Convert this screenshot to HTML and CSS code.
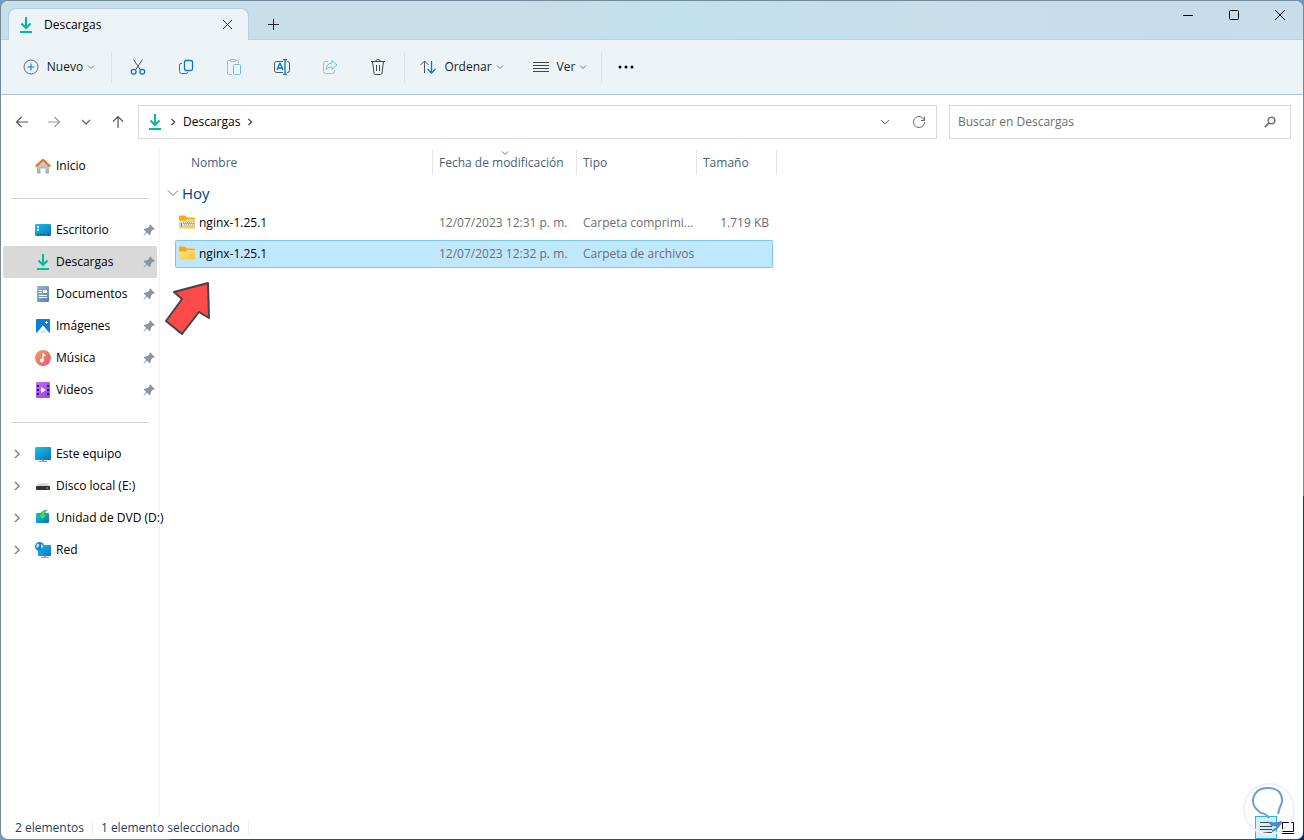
FILE: index.html
```
<!DOCTYPE html>
<html lang="es">
<head>
  <meta charset="UTF-8">
  <meta name="viewport" content="width=device-width, initial-scale=1.0">
  <title>Descargas</title>
  <link rel="stylesheet" href="styles.css">
</head>
<body>
  <svg class="defs" aria-hidden="true">
    <defs>
      <linearGradient id="gBlue" x1="0" y1="0" x2="1" y2="1"><stop offset="0" stop-color="#12c8e8"/><stop offset="1" stop-color="#0f6fc0"/></linearGradient>
      <linearGradient id="gFolder" x1="0" y1="0" x2="1" y2="1"><stop offset="0" stop-color="#ffe38a"/><stop offset="1" stop-color="#fcc43a"/></linearGradient>
      <linearGradient id="gDoc" x1="0" y1="0" x2="1" y2="1"><stop offset="0" stop-color="#9db9d0"/><stop offset="1" stop-color="#587ea6"/></linearGradient>
      <linearGradient id="gMusic" x1="0" y1="0" x2="1" y2="1"><stop offset="0" stop-color="#f89a68"/><stop offset="1" stop-color="#dd5a7c"/></linearGradient>
      <linearGradient id="gVideo" x1="0" y1="0" x2="1" y2="1"><stop offset="0" stop-color="#c070f8"/><stop offset="1" stop-color="#9a40e0"/></linearGradient>
      <linearGradient id="gHome" x1="0" y1="0" x2="0" y2="1"><stop offset="0" stop-color="#d8d8d8"/><stop offset="1" stop-color="#a8a8a8"/></linearGradient>
    </defs>
    <symbol id="download" viewBox="0 0 16 16"><path d="M8 0v11M3.500 6.500 8 11 12.500 6.500M2 15h12" fill="none" stroke="#00bd96" stroke-width="2"/></symbol>
    <symbol id="down" viewBox="0 0 8 8"><path d="M1 2.500 4 5.500 7 2.500" fill="none" stroke="currentColor"/></symbol>
    <symbol id="right" viewBox="0 0 10 10"><path d="M3 1l4 4-4 4" fill="none" stroke="currentColor" stroke-width="1.500"/></symbol>
    <symbol id="pin" viewBox="0 0 12 12"><path d="M7.300.500 11.700 5 10.500 6 9.700 5.700 7.800 7.900 7.600 10.300 6.400 11.200 4 8.700 1 11.500.500 11 3.300 8 .800 5.700 1.700 4.400 4.200 4.300 6.400 2.400 6.200 1.500Z" fill="#8996a0"/></symbol>
    <symbol id="folder" viewBox="0 0 16 14"><path d="M0 1.500Q0 .5 1 .5h5l2 2h7q1 0 1 1V8H0Z" fill="#f9ab0d"/><path d="M0 5.500h6.500L8 4h8v8.500q0 1-1 1H1q-1 0-1-1Z" fill="url(#gFolder)"/></symbol>
  </svg>

  <div class="window">
    <header class="titlebar">
      <div class="tab">
        <svg class="icon"><use href="#download"/></svg>
        <span class="tab-name">Descargas</span>
        <button class="tab-close" aria-label="Cerrar pestaña"><svg width="9" height="9" viewBox="0 0 9 9"><path d="M0 0l9 9M9 0 0 9" stroke="#222"/></svg></button>
      </div>
      <button class="new-tab" aria-label="Nueva pestaña"><svg width="11" height="11" viewBox="0 0 11 11"><path d="M5.500 0v11M0 5.500h11" stroke="#222"/></svg></button>
      <div class="window-buttons">
        <button aria-label="Minimizar"><svg width="10" height="10" viewBox="0 0 10 10"><path d="M0 5.500h10" stroke="#000"/></svg></button>
        <button aria-label="Maximizar"><svg width="10" height="10" viewBox="0 0 10 10"><rect x=".5" y=".5" width="9" height="9" rx="1" fill="none" stroke="#000"/></svg></button>
        <button aria-label="Cerrar"><svg width="10" height="10" viewBox="0 0 10 10"><path d="M0 0l10 10M10 0 0 10" stroke="#000"/></svg></button>
      </div>
    </header>

    <div class="toolbar">
      <button class="tool tool-new">
        <svg class="icon" viewBox="0 0 16 16" fill="none"><circle cx="8" cy="8" r="7" stroke="#666"/><path d="M8 4.500v7M4.500 8h7" stroke="#0078d4"/></svg>
        Nuevo <svg class="caret"><use href="#down"/></svg>
      </button>
      <span class="divider"></span>
      <div class="tool-group">
        <button class="tool-icon" aria-label="Cortar"><svg class="icon" viewBox="0 0 16 16" fill="none"><path d="M3.500.500 10.500 11M12.500.500 5.500 11" stroke="#555"/><circle cx="3.700" cy="12.800" r="2.400" stroke="#0078d4" stroke-width="1.300"/><circle cx="12.300" cy="12.800" r="2.400" stroke="#0078d4" stroke-width="1.300"/></svg></button>
        <button class="tool-icon" aria-label="Copiar"><svg class="icon" viewBox="0 0 16 16" fill="none"><path d="M4 4.500H3Q1.500 4.500 1.500 6v6.500q0 2 2 2H8q1.500 0 1.500-1.500" stroke="#666"/><rect x="6.500" y="1.500" width="8" height="10" rx="1.500" stroke="#0078d4" stroke-width="1.300"/></svg></button>
        <button class="tool-icon" aria-label="Pegar" disabled><svg class="icon" viewBox="0 0 16 16" fill="none"><path d="M6 15.500H2.500q-1 0-1-1v-12q0-1 1-1H4M10 1.500h1.500q1 0 1 1V4M4.500.500h5v2h-5z" stroke="#b4b8ba"/><rect x="7.500" y="5.500" width="7" height="10" rx="1" stroke="#6ebee8"/></svg></button>
        <button class="tool-icon" aria-label="Cambiar nombre"><svg class="icon" viewBox="0 0 16 16" fill="none"><path d="M9 2.500H2.500q-2 0-2 2v7q0 2 2 2H9M13 2.500h.500q2 0 2 2v7q0 2-2 2H13" stroke="#555"/><path d="M3 11 5.800 4.500h.400L9 11M4 9h4M11 .500v15M9 .500h4M9 15.500h4" stroke="#0078d4" stroke-width="1.300"/></svg></button>
        <button class="tool-icon" aria-label="Compartir" disabled><svg class="icon" viewBox="0 0 16 16" fill="none"><path d="M6 2.500H3.500q-2 0-2 2v8q0 2 2 2h7q2 0 2-2V11" stroke="#b4b8ba"/><path d="M10 1.500 15 6l-5 4.500V8Q6 7.500 4 10.500 4.500 4.500 10 4Z" stroke="#6ebee8" stroke-linejoin="round"/></svg></button>
        <button class="tool-icon" aria-label="Eliminar"><svg class="icon" viewBox="0 0 16 16" fill="none" stroke="#444"><path d="M1 2.500h14M5.500 2.500Q6 .500 8 .500t2.500 2M2.500 2.500 4 14q.200 1.500 1.500 1.500h5q1.300 0 1.500-1.500l1.500-11.500M6.500 6v6M9.500 6v6"/></svg></button>
      </div>
      <span class="divider"></span>
      <button class="tool tool-sort">
        <svg class="icon" viewBox="0 0 16 16" fill="none"><path d="M4.500 14V2M.500 6l4-4 4 4" stroke="#555"/><path d="M11.500 2v12M7.500 10l4 4 4-4" stroke="#0078d4" stroke-width="1.300"/></svg>
        Ordenar <svg class="caret"><use href="#down"/></svg>
      </button>
      <button class="tool tool-view">
        <svg class="icon" viewBox="0 0 16 16"><path d="M0 3.500h16M0 6.500h16M0 9.500h16M0 12.500h16" stroke="#444"/></svg>
        Ver <svg class="caret"><use href="#down"/></svg>
      </button>
      <span class="divider"></span>
      <button class="tool-icon more" aria-label="Más opciones"><svg class="icon" viewBox="0 0 16 16"><circle cx="2" cy="8" r="1.500"/><circle cx="8" cy="8" r="1.500"/><circle cx="14" cy="8" r="1.500"/></svg></button>
    </div>

    <nav class="address-row">
      <div class="history">
        <button aria-label="Atrás"><svg width="14" height="14" viewBox="0 0 14 14" fill="none"><path d="M13 7H1.500M6.500 2l-5 5 5 5" stroke="#555" stroke-width="1.200"/></svg></button>
        <button aria-label="Adelante" disabled><svg width="14" height="14" viewBox="0 0 14 14" fill="none"><path d="M1 7h11.500M7.500 2l5 5-5 5" stroke="#999" stroke-width="1.200"/></svg></button>
        <button aria-label="Recientes"><svg width="10" height="10" viewBox="0 0 10 10" fill="none"><path d="M1 3l4 4 4-4" stroke="#666" stroke-width="1.300"/></svg></button>
        <button aria-label="Subir"><svg width="14" height="14" viewBox="0 0 14 14" fill="none"><path d="M7 13V1.500M2 6.500l5-5 5 5" stroke="#555" stroke-width="1.200"/></svg></button>
      </div>
      <div class="address">
        <svg class="icon"><use href="#download"/></svg>
        <svg class="crumb-arrow"><use href="#right"/></svg>
        <a href="#descargas">Descargas</a>
        <svg class="crumb-arrow"><use href="#right"/></svg>
        <button class="address-menu" aria-label="Ubicaciones anteriores"><svg width="10" height="10" viewBox="0 0 10 10" fill="none"><path d="M1 3l4 4 4-4" stroke="#666"/></svg></button>
        <button aria-label="Actualizar"><svg width="14" height="14" viewBox="0 0 14 14" fill="none"><path d="M12.300 5.500A5.500 5.500 0 1 0 12.500 7M12.500 1.500v4H9" stroke="#666"/></svg></button>
      </div>
      <div class="search">
        <input type="text" aria-label="Buscar en Descargas" placeholder="Buscar en Descargas">
        <svg width="12" height="12" viewBox="0 0 12 12" fill="none"><circle cx="7.500" cy="4.500" r="3.300" stroke="#777" stroke-width="1.600"/><path d="M5 7 .800 11.200" stroke="#777" stroke-width="1.800"/></svg>
      </div>
    </nav>

    <div class="content">
      <aside class="sidebar">
        <a class="place" href="#inicio"><svg class="icon" viewBox="0 0 16 16"><path d="M2 7.500 8 2l6 5.500V14.500q0 1-1 1h-2.500v-5h-5v5H3q-1 0-1-1Z" fill="url(#gHome)"/><path d="M.800 8.500 8 1.800l7.200 6.700" fill="none" stroke="#f06a1c" stroke-width="2" stroke-linejoin="round"/></svg>Inicio</a>
        <hr>
        <a class="place" href="#escritorio"><svg class="icon" viewBox="0 0 16 16"><rect y="2" width="16" height="12" rx="1" fill="url(#gBlue)"/><path d="M2 4h2v2H2zM2 7h2v2H2z" fill="#fff"/><path d="M2 12.500h2M5 12.500h2M8 12.500h2M12 12.500h2" stroke="#064b8a"/></svg>Escritorio<svg class="pin"><use href="#pin"/></svg></a>
        <a class="place active" href="#descargas"><svg class="icon"><use href="#download"/></svg>Descargas<svg class="pin"><use href="#pin"/></svg></a>
        <a class="place" href="#documentos"><svg class="icon" viewBox="0 0 16 16"><rect x="2" y="0" width="12" height="16" rx="1" fill="url(#gDoc)"/><path d="M4 4.500h3M4 6.500h3M4 9.500h8M4 11.500h8" stroke="#fff"/><path d="M8 4h4v3H8z" fill="#fff"/></svg>Documentos<svg class="pin"><use href="#pin"/></svg></a>
        <a class="place" href="#imagenes"><svg class="icon" viewBox="0 0 16 16"><rect x="1" y="1" width="14" height="14" rx="1" fill="#0f7fd6"/><path d="M1.500 15 8 7.500 14.500 15Z" fill="#fff"/><path d="M5 15l3-3.500 3 3.500Z" fill="#cfe6f8"/><path d="M11.500 3v3M10 4.500h3" stroke="#fff"/></svg>Imágenes<svg class="pin"><use href="#pin"/></svg></a>
        <a class="place" href="#musica"><svg class="icon" viewBox="0 0 16 16"><circle cx="8" cy="8" r="8" fill="url(#gMusic)"/><path d="M8 3v7M8 3.500q1 2 2.500 2" fill="none" stroke="#fff" stroke-width="1.300"/><circle cx="6.800" cy="10.500" r="1.900" fill="#fff"/></svg>Música<svg class="pin"><use href="#pin"/></svg></a>
        <a class="place" href="#videos"><svg class="icon" viewBox="0 0 16 16"><rect x="1" width="14" height="16" rx="1" fill="url(#gVideo)"/><path d="M2 3h2v2H2zM2 7h2v2H2zM2 11h2v2H2zM12 3h2v2h-2zM12 7h2v2h-2zM12 11h2v2h-2z" fill="#3b1470"/><path d="M6 5l5 3-5 3Z" fill="#fff"/></svg>Videos<svg class="pin"><use href="#pin"/></svg></a>
        <hr>
        <a class="place tree" href="#equipo"><svg class="expand"><use href="#right"/></svg><svg class="icon" viewBox="0 0 16 16"><path d="M7 12h2v3H7z" fill="#9ab"/><path d="M4 15.500h8" stroke="#8a9ba8"/><rect y="1" width="16" height="13" rx="1" fill="url(#gBlue)"/></svg>Este equipo</a>
        <a class="place tree" href="#disco"><svg class="expand"><use href="#right"/></svg><svg class="icon" viewBox="0 0 16 16"><path d="M3 5.500h10l2 3H1Z" fill="#d5d5d5"/><rect x="1" y="8" width="14" height="4" rx="1" fill="#333"/><path d="M11 10h2" stroke="#4ddc7a"/></svg>Disco local (E:)</a>
        <a class="place tree" href="#dvd"><svg class="expand"><use href="#right"/></svg><svg class="icon" viewBox="0 0 16 16"><rect x="1" y="3" width="13" height="10" rx="1" fill="url(#gBlue)"/><path d="M12.500 0Q6.500 0 6 4.500H3l4.500 5 4.500-5H9.500Q9.500 1.500 12.500 0Z" fill="#3ae06d" stroke="#128a3c" stroke-width=".500"/></svg>Unidad de DVD (D:)</a>
        <a class="place tree" href="#red"><svg class="expand"><use href="#right"/></svg><svg class="icon" viewBox="0 0 16 16"><path d="M9 13h2v2H9z" fill="#9ab"/><path d="M6 15.500h8" stroke="#8a9ba8"/><rect x="3" y="3" width="13" height="11" rx="1" fill="url(#gBlue)"/><circle cx="4.500" cy="4.500" r="4.500" fill="#1687cf"/><path d="M2 1.500q3 .500 2 2.500T1 5.500M6 2q2 1 2.500 2.500L6 7Z" fill="#b9e6f5"/></svg>Red</a>
      </aside>

      <main class="files">
        <table>
          <colgroup><col class="c-name"><col class="c-date"><col class="c-type"><col class="c-size"><col class="c-end"></colgroup>
          <thead>
            <tr><th>Nombre</th><th class="sorted">Fecha de modificación<svg class="sort-mark"><use href="#down"/></svg></th><th>Tipo</th><th>Tamaño</th><th class="end"></th></tr>
          </thead>
          <tbody>
            <tr class="group"><td colspan="5"><button><svg width="12" height="12" viewBox="0 0 12 12" fill="none"><path d="M1 3.500l5 5 5-5" stroke="#777"/></svg>Hoy</button></td></tr>
            <tr>
              <td class="name"><svg class="file-icon" viewBox="0 0 16 14"><use href="#folder"/><path d="M1 8.500h15" stroke="#f3f3f3" stroke-width="3"/><path d="M2 8h14" stroke="#666" stroke-dasharray="1 1"/><path d="M3 9h13" stroke="#777" stroke-dasharray="1 1"/><path d="M1 7h3v6H1z" fill="#ddd"/><path d="M2.500 8v4" stroke="#777"/></svg>nginx-1.25.1</td>
              <td>12/07/2023 12:31 p. m.</td><td>Carpeta comprimi...</td><td class="size">1.719 KB</td><td class="end"></td>
            </tr>
            <tr class="selected">
              <td class="name"><svg class="file-icon"><use href="#folder"/></svg>nginx-1.25.1</td>
              <td>12/07/2023 12:32 p. m.</td><td>Carpeta de archivos</td><td class="size"></td><td class="end"></td>
            </tr>
          </tbody>
        </table>
        <svg class="pointer" width="56" height="60" viewBox="0 0 56 60"><path d="M48 6 14 15 22 22 6 44 22 57 39 35 49 41Z" fill="#ff4a4a" stroke="#444" stroke-width="2" stroke-linejoin="round"/></svg>
      </main>
    </div>

    <footer class="statusbar">
      <span>2 elementos</span>
      <span>1 elemento seleccionado</span>
      <div class="views">
        <button class="on" aria-label="Detalles"><svg width="12" height="11" viewBox="0 0 12 11"><path d="M0 .500h12M0 4.500h12M0 7.500h12M0 10.500h12" stroke="#444"/></svg></button>
        <button aria-label="Iconos grandes"><svg width="12" height="12" viewBox="0 0 12 12" fill="none"><path d="M.500.500h11v9H.500zM0 11.500h12" stroke="#000"/></svg></button>
      </div>
    </footer>
    <svg class="watermark" width="52" height="52" viewBox="0 0 52 52" fill="none"><circle cx="26" cy="26" r="25" stroke="#eef1f7" stroke-width="2"/><path d="M26 35Q24 31 18 30 9 24 10 16 13 4 26 5q14 1 13 14-3 7-4 12" stroke="#6d9fd2" stroke-width="2"/><path d="M39 39q-6 2-12 1l2 2q4 1 8-1-3 5-8 7" stroke="#4d8ccc" stroke-width="2"/></svg>
  </div>
</body>
</html>
```
FILE: styles.css
```
* {
  box-sizing: border-box;
}
body {
  margin: 0;
  background: linear-gradient(135deg, #6f9fc4 60%, #062060 90%);
  font-family: "Open Sans", "Noto Sans", sans-serif;
  font-size: 12px;
  line-height: 16px;
  color: #000;
}
a {
  color: inherit;
  text-decoration: none;
}
button {
  display: flex;
  align-items: center;
  justify-content: center;
  padding: 0;
  border: 0;
  background: none;
  font: inherit;
  color: inherit;
}
svg {
  flex: none;
}
.defs {
  position: absolute;
  width: 0;
  height: 0;
}
.icon {
  width: 16px;
  height: 16px;
}
.window {
  position: relative;
  display: flex;
  flex-direction: column;
  height: 100vh;
  border: 1px solid transparent;
  border-radius: 8px;
  background:
    linear-gradient(#fff, #fff) padding-box,
    linear-gradient(180deg, #71899b 59%, #123c78 59%) right / 1px 100% no-repeat border-box,
    linear-gradient(90deg, #71899b 13%, #1a5590 13%) bottom / 100% 1px no-repeat border-box,
    #71899b border-box;
  overflow: hidden;
}

/* title bar */
.titlebar {
  display: flex;
  height: 39px;
  border-bottom: 1px solid #b5d0e0;
  background: linear-gradient(90deg, #c8dee9 40%, #c3e0ee 52%, #c7deeb 70%, #c8dceb);
}
.tab {
  display: flex;
  align-items: center;
  width: 241px;
  height: 39px;
  margin: 7px 0 0 7px;
  padding: 0 16px 7px 9px;
  border: 1px solid #b5d0e0;
  border-bottom: 0;
  border-radius: 8px 8px 0 0;
  background: #ecf4f8;
}
.tab-name {
  flex: 1;
  margin-left: 10px;
}
.new-tab {
  width: 48px;
  padding-top: 9px;
}
.window-buttons {
  display: flex;
  margin-left: auto;
}
.window-buttons button {
  width: 46px;
  height: 28px;
}

/* command bar */
.toolbar {
  display: flex;
  align-items: center;
  height: 55px;
  border-bottom: 1px solid #a9c6da;
  background: #ecf4f8;
}
.tool {
  color: #1a1a1a;
}
.tool .icon {
  margin-right: 8px;
}
.tool-new {
  width: 110px;
  padding-left: 6px;
}
.tool-sort {
  width: 114px;
}
.tool-view {
  width: 82px;
}
.caret {
  width: 8px;
  height: 8px;
  margin-left: 4px;
  color: #777;
}
.divider {
  width: 1px;
  height: 31px;
  background: #dbe3e8;
}
.tool-group {
  display: flex;
  padding: 0 2px;
}
.tool-icon {
  width: 48px;
  height: 32px;
}

/* address and search */
.address-row {
  display: flex;
  align-items: center;
  height: 52px;
  padding: 2px 12px 0 5px;
}
.history {
  display: flex;
  width: 132px;
}
.history button {
  width: 32px;
  height: 32px;
}
.address,
.search {
  display: flex;
  align-items: center;
  height: 34px;
  border: 1px solid #d9d9d9;
}
.address {
  flex: 1;
  padding: 0 10px 0 8px;
  margin-right: 12px;
}
.crumb-arrow {
  width: 8px;
  height: 8px;
  margin: 0 6px;
  color: #444;
}
.address button {
  width: 14px;
  height: 32px;
}
.address .address-menu {
  margin: 0 20px 0 auto;
}
.search {
  width: 342px;
  padding: 0 14px 0 8px;
}
.search input {
  flex: 1;
  min-width: 0;
  padding: 0;
  border: 0;
  outline: 0;
  background: none;
  font: inherit;
}
.search input::placeholder {
  color: #6d6d6d;
  opacity: 1;
}

/* navigation pane */
.content {
  display: flex;
  flex: 1;
  min-height: 0;
}
.sidebar {
  width: 159px;
  padding: 3px 2px 0 2px;
  border-right: 1px solid #f2f2f2;
}
.place {
  display: flex;
  align-items: center;
  height: 32px;
  padding: 0 2px 0 32px;
  border-radius: 2px;
  white-space: nowrap;
}
.place .icon {
  margin-right: 5px;
}
.place.active {
  background: #d9d9d9;
}
.place.tree {
  padding: 0 0 0 9px;
}
.pin {
  width: 12px;
  height: 12px;
  margin-left: auto;
}
.expand {
  width: 10px;
  height: 10px;
  margin-right: 13px;
  color: #888;
}
.sidebar hr {
  height: 1px;
  margin: 16px 8px 15px;
  border: 0;
  background: #d5d5d5;
}

/* file list */
.files {
  position: relative;
  flex: 1;
  padding-left: 15px;
}
table {
  table-layout: fixed;
  width: 602px;
  border-spacing: 0 3px;
}
.c-name {
  width: 258px;
}
.c-date {
  width: 144px;
}
.c-type {
  width: 120px;
}
.c-size {
  width: 76px;
}
.c-end {
  width: 4px;
}
th {
  position: relative;
  height: 25px;
  padding: 0 0 0 6px;
  border-right: 1px solid #e5e5e5;
  font-weight: 400;
  text-align: left;
  white-space: nowrap;
  color: #44617f;
}
th:first-child {
  padding-left: 16px;
}
th:nth-child(4) {
  border-right: 0;
}
th.end {
  padding: 0;
}
.sort-mark {
  position: absolute;
  top: -1px;
  left: 50%;
  width: 8px;
  height: 8px;
  margin-left: -4px;
  color: #777;
}
td {
  height: 28px;
  padding: 0 0 0 6px;
  border: 0 solid #7cc8f5;
  white-space: nowrap;
  color: #6d6d6d;
}
.name {
  padding-left: 4px;
  color: #000;
}
.file-icon {
  width: 16px;
  height: 14px;
  margin-right: 4px;
  vertical-align: -2px;
}
.size {
  padding-right: 4px;
  text-align: right;
}
.selected td {
  border-width: 1px 0;
  background: #bfe8ff;
}
.selected .name {
  padding-left: 3px;
  border-left-width: 1px;
  border-radius: 2px 0 0 2px;
}
.selected .size {
  border-right-width: 1px;
  border-radius: 0 2px 2px 0;
}
td.end,
.selected .end {
  padding: 0;
  border: 0;
  background: none;
}
.group td {
  padding: 2px 0 0;
}
.group button {
  gap: 3px;
  margin-left: -8px;
  font-size: 15px;
  color: #003e87;
}
.pointer {
  position: absolute;
  top: 130px;
  left: 0;
}

/* status bar */
.statusbar {
  display: flex;
  align-items: center;
  height: 23px;
  padding-left: 14px;
  color: #1d3f6b;
}
.statusbar span {
  padding-right: 8px;
  margin-right: 8px;
  border-right: 1px solid #f0f0f0;
}
.views {
  display: flex;
  margin-left: auto;
  padding-right: 4px;
}
.views button {
  width: 22px;
  height: 23px;
}
.views .on {
  border: 1px solid #26b7e8;
  background: #d3f1fb;
}
.watermark {
  position: absolute;
  right: 8px;
  bottom: 4px;
  pointer-events: none;
}
```
